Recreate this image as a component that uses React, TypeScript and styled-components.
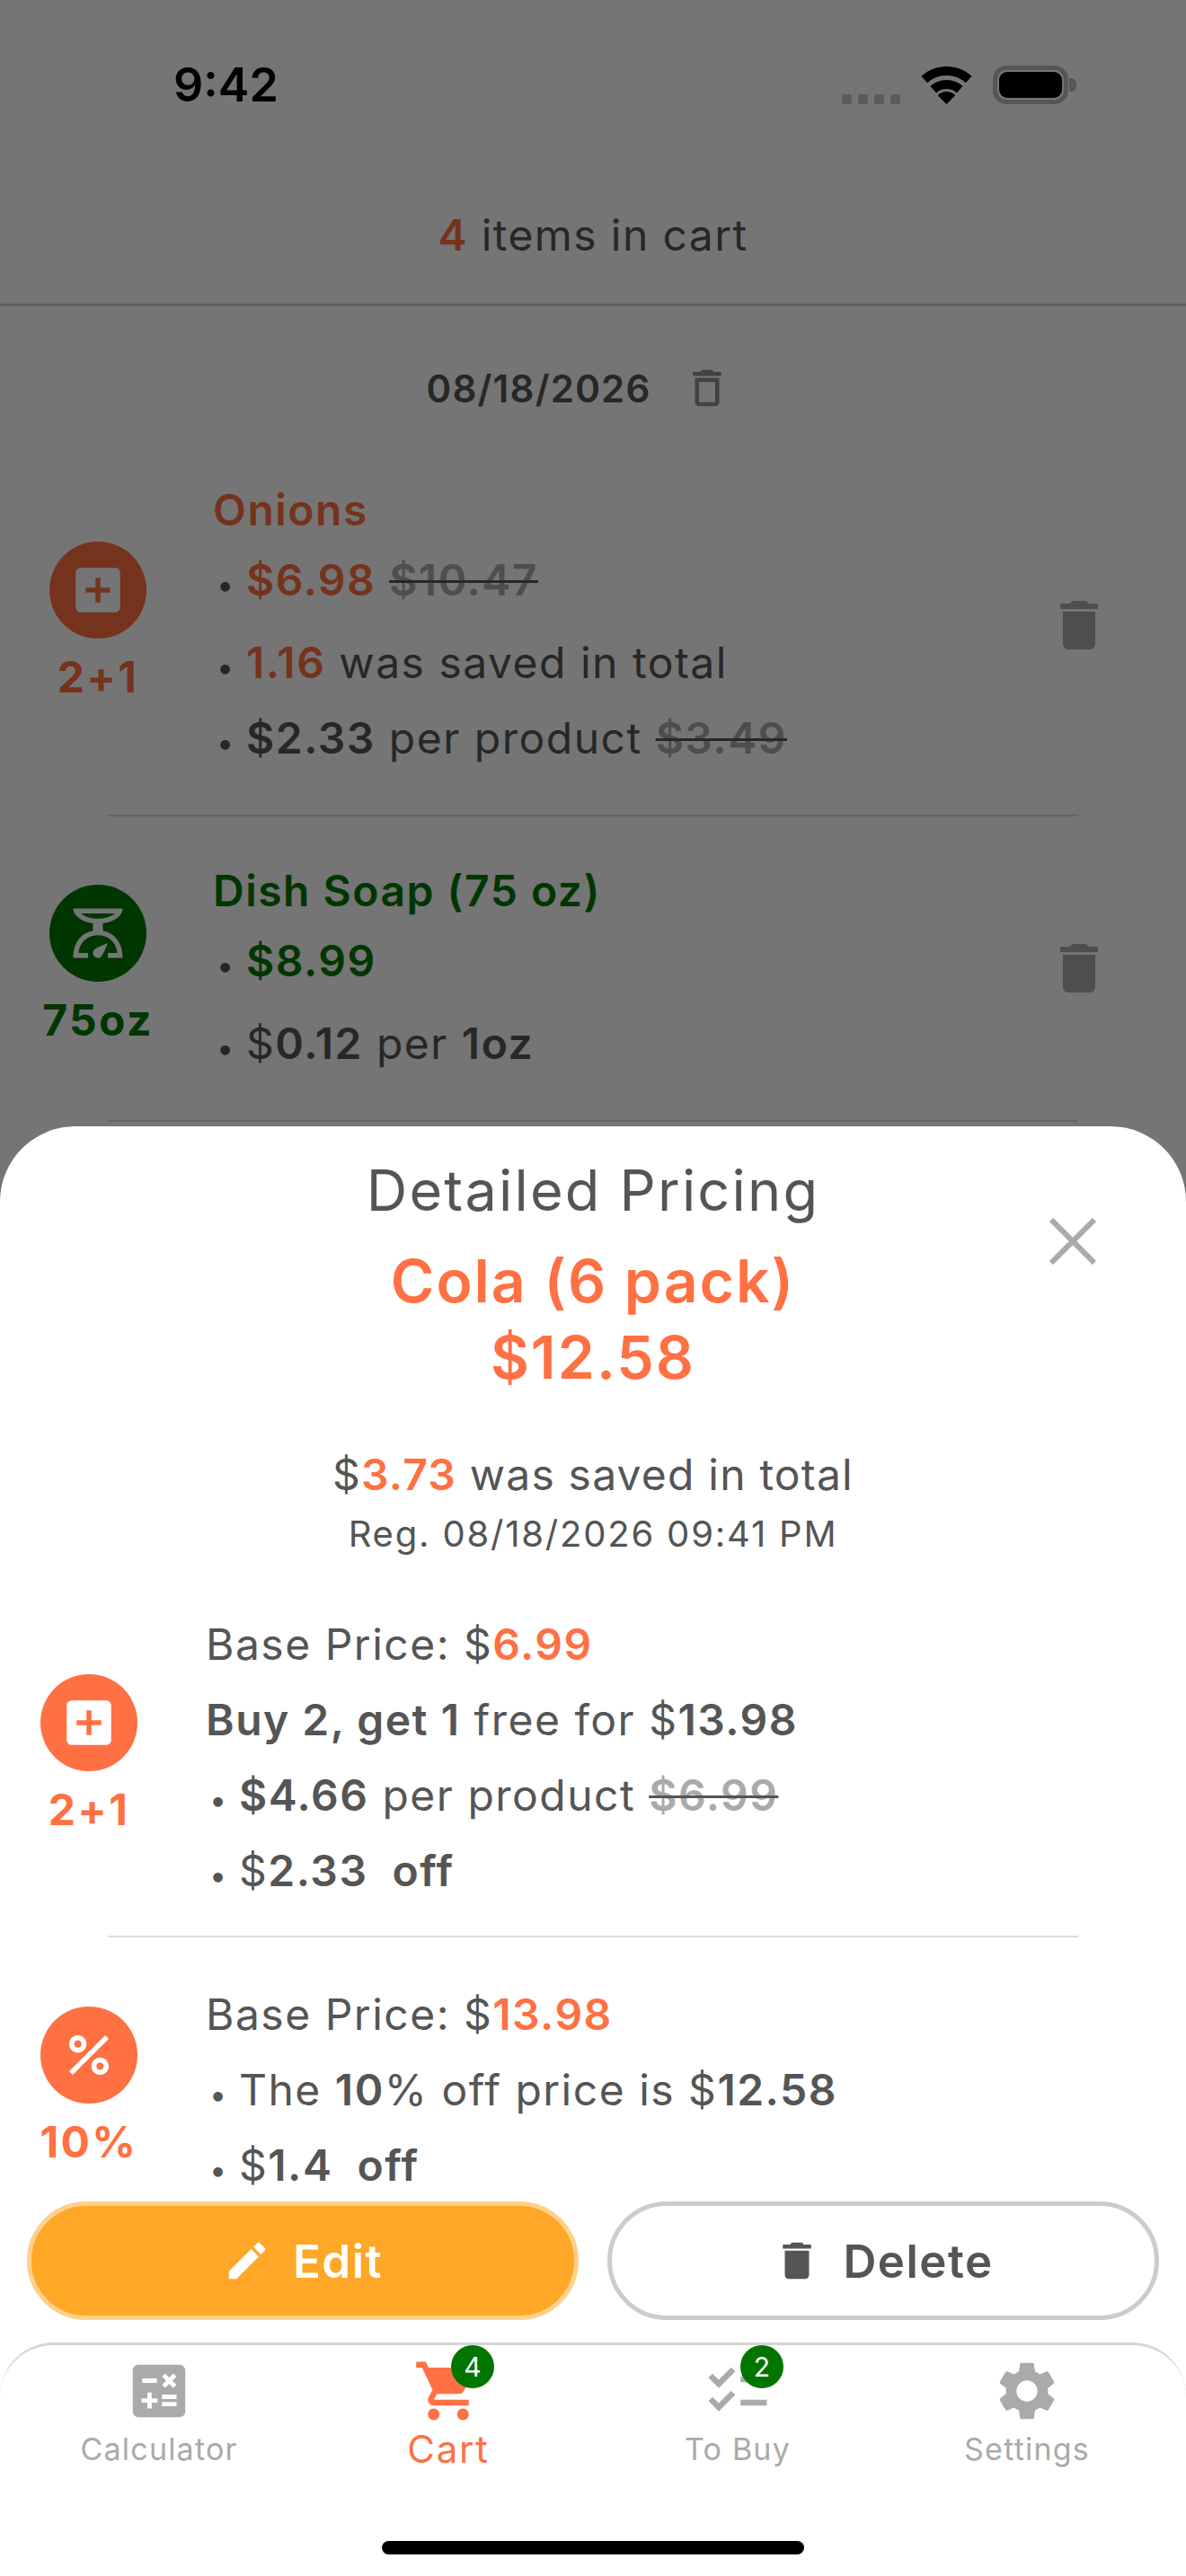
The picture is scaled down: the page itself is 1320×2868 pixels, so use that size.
import styled, { createGlobalStyle } from 'styled-components'
import { MdAddBox, MdCalculate, MdChecklist, MdDelete, MdDeleteOutline, MdEdit, MdOutlineScale, MdPercent, MdSettings, MdShoppingCart } from 'react-icons/md'
import type { ReactNode } from 'react'

const ORANGE = '#ff7043'
const GREEN = '#007700'
const TEXT = '#555555'
const MUTED = '#aaaaaa'

const GlobalStyle = createGlobalStyle`
    html, body {
        margin: 0;
        padding: 0;
        background: #fff;
    }
    * {
        box-sizing: border-box;
    }
`

const Page = styled.div`
    position: relative;
    width: 1320px;
    height: 2868px;
    overflow: hidden;
    background: #fff;
    color: ${TEXT};
    font-family: Inter, "Noto Sans", sans-serif;
`

const Scrim = styled.div`
    position: absolute;
    inset: 0;
    background: rgba(0, 0, 0, 0.54);
`

// status bar
const StatusBar = styled.div`
    display: flex;
    justify-content: space-between;
    align-items: flex-start;
    height: 130px;
    padding: 73px 131px 0 193px;
`

const Time = styled.div`
    font-size: 52px;
    font-weight: 600;
    line-height: 44px;
    color: #000;
`

const StatusIcons = styled.div`
    display: flex;
    align-items: flex-end;
    height: 43px;
`

const SignalDots = styled.div`
    display: flex;
    gap: 7px;
    margin-right: 23px;
`

const SignalDot = styled.span`
    width: 11px;
    height: 11px;
    border-radius: 3px;
    background: #c4c4c4;
`

const WifiIcon = styled.svg`
    display: block;
    margin-right: 23px;
`

const Battery = styled.div`
    position: relative;
    width: 84px;
    height: 43px;
    padding: 2px;
    border: 5px solid #bcbcbc;
    border-radius: 15px;

    &::after {
        content: '';
        position: absolute;
        top: 9px;
        right: -14px;
        width: 8px;
        height: 15px;
        border-radius: 0 6px 6px 0;
        background: #bcbcbc;
    }
`

const BatteryFill = styled.div`
    width: 100%;
    height: 100%;
    border-radius: 9px;
    background: #000;
`

// cart list behind the sheet
const CartHeader = styled.div`
    padding: 94px 0 38px;
    border-bottom: 3px solid #cccccc;
    font-size: 48px;
    line-height: 76px;
    letter-spacing: 1.4px;
    text-align: center;
`

const Strong = styled.b<{ $color?: string }>`
    font-weight: 600;
    color: ${({ $color }) => $color ?? 'inherit'};
`

const DateRow = styled.div`
    display: flex;
    justify-content: center;
    align-items: center;
    gap: 36px;
    height: 60px;
    margin: 61px 0 23px;
    padding-right: 31px;
    font-size: 42px;
    font-weight: 600;
    letter-spacing: 1.2px;

    svg {
        color: #909090;
    }
`

const Row = styled.div<{ $sheet?: boolean }>`
    display: flex;
    align-items: center;
    padding: ${({ $sheet }) => ($sheet ? '44px 0 30px 20px' : '0 83px 0 30px')};
`

const Badge = styled.div<{ $color: string; $sheet?: boolean }>`
    display: flex;
    flex-direction: column;
    align-items: center;
    flex: 0 0 158px;
    margin-right: ${({ $sheet }) => ($sheet ? '51px' : '49px')};
    padding-bottom: 14px;
    color: ${({ $color }) => $color};
`

const BadgeCircle = styled.div<{ $color: string }>`
    display: flex;
    justify-content: center;
    align-items: center;
    width: 108px;
    height: 108px;
    border-radius: 50%;
    background: ${({ $color }) => $color};
    color: #fff;
`

const BadgeLabel = styled.div`
    height: 44px;
    margin-top: 21px;
    font-size: 48px;
    font-weight: 700;
    line-height: 44px;
    letter-spacing: 2.4px;
    white-space: nowrap;
`

const Lines = styled.div<{ $sheet?: boolean }>`
    flex: 1;
    min-width: 0;
    padding: ${({ $sheet }) => ($sheet ? '0' : '53px 0 43px')};
`

const ItemName = styled.div<{ $color: string }>`
    height: 60px;
    font-size: 48px;
    font-weight: 600;
    line-height: 60px;
    letter-spacing: 1.5px;
    color: ${({ $color }) => $color};
`

const Line = styled.div<{ $price?: boolean; $sheet?: boolean }>`
    height: ${({ $price }) => ($price ? '96px' : '84px')};
    margin-bottom: ${({ $price }) => ($price ? '2px' : '0')};
    font-size: 48px;
    line-height: ${({ $price }) => ($price ? '96px' : '84px')};
    letter-spacing: 1.5px;
    white-space: pre-wrap;
`

const Bullet = styled.span`
    display: inline-block;
    width: 37px;
    padding-left: 4px;
    font-size: 34px;
    letter-spacing: 0;
`

const Struck = styled.span`
    font-weight: 600;
    color: ${MUTED};
    text-decoration: line-through;
    text-decoration-color: ${TEXT};
    text-decoration-thickness: 3px;
`

const RowTrash = styled.div`
    flex: 0 0 72px;
    height: 72px;
    color: ${MUTED};
`

const Divider = styled.div`
    height: 2px;
    margin: 0 120px;
    background: #dddddd;
`

// bottom sheet
const Sheet = styled.div`
    position: absolute;
    top: 1254px;
    left: 0;
    right: 0;
    bottom: 0;
    display: flex;
    flex-direction: column;
    padding-top: 33px;
    border-radius: 84px 84px 0 0;
    background: #fff;
`

const SheetTitle = styled.div`
    font-size: 63px;
    line-height: 76px;
    letter-spacing: 2.2px;
    text-align: center;
`

const CloseButton = styled.svg`
    position: absolute;
    top: 102px;
    right: 100px;
`

const ProductName = styled.div`
    margin-top: 21px;
    font-size: 66px;
    font-weight: 600;
    line-height: 85px;
    letter-spacing: 2px;
    text-align: center;
    color: ${ORANGE};
`

const ProductPrice = styled(ProductName)`
    margin-top: 0;
`

const Saved = styled.div`
    margin-top: 58px;
    font-size: 48px;
    line-height: 60px;
    letter-spacing: 1.2px;
    text-align: center;
`

const Registered = styled.div`
    margin-top: 6px;
    font-size: 40px;
    line-height: 60px;
    letter-spacing: 1.8px;
    text-align: center;
`

const Details = styled.div`
    flex: 1;
    min-height: 0;
    margin-top: 7px;
    overflow: hidden;
`

const Buttons = styled.div`
    display: flex;
    gap: 32px;
    padding: 0 30px;
`

const ActionButton = styled.button<{ $primary?: boolean }>`
    display: flex;
    flex: 1;
    justify-content: center;
    align-items: center;
    gap: 24px;
    height: 132px;
    border: 5px solid ${({ $primary }) => ($primary ? '#ffd08a' : '#cccccc')};
    border-radius: 66px;
    background: ${({ $primary }) => ($primary ? '#ffa726' : '#fff')};
    color: ${({ $primary }) => ($primary ? '#fff' : TEXT)};
    font-family: inherit;
    font-size: 51px;
    font-weight: 600;
    letter-spacing: 1.5px;
`

// tab bar
const TabBar = styled.div`
    display: grid;
    grid-template-columns: repeat(4, 1fr);
    align-content: start;
    height: 260px;
    margin-top: 25px;
    padding: 12px 16px 0;
    border-top: 3px solid #d5d5d5;
    border-radius: 60px 60px 0 0;
`

const Tab = styled.div<{ $active?: boolean }>`
    display: flex;
    flex-direction: column;
    align-items: center;
    color: ${({ $active }) => ($active ? ORANGE : MUTED)};
`

const TabIcon = styled.div`
    position: relative;
    width: 78px;
    height: 78px;
`

const CountBadge = styled.div`
    position: absolute;
    top: -12px;
    left: 42px;
    display: flex;
    justify-content: center;
    align-items: center;
    width: 48px;
    height: 48px;
    border-radius: 50%;
    background: #007500;
    color: #fff;
    font-size: 30px;
`

const TabLabel = styled.div<{ $active?: boolean }>`
    margin-top: 3px;
    font-size: ${({ $active }) => ($active ? '42px' : '34px')};
    line-height: 46px;
    letter-spacing: ${({ $active }) => ($active ? '1.8px' : '1.2px')};
`

const HomeIndicator = styled.div`
    position: absolute;
    bottom: 24px;
    left: 425px;
    width: 470px;
    height: 15px;
    border-radius: 8px;
    background: #000;
`

type PriceRowProps = {
    icon: ReactNode
    label: string
    color: string
    sheet?: boolean
    children: ReactNode
}

const PriceRow = ({ icon, label, color, sheet, children }: PriceRowProps) => (
    <Row $sheet={sheet}>
        <Badge $color={color} $sheet={sheet}>
            <BadgeCircle $color={color}>{icon}</BadgeCircle>
            <BadgeLabel>{label}</BadgeLabel>
        </Badge>
        <Lines $sheet={sheet}>{children}</Lines>
        {!sheet && (
            <RowTrash>
                <MdDelete size={72} />
            </RowTrash>
        )}
    </Row>
)

export default function App() {
    return (
        <>
            <GlobalStyle />
            <Page>
                <StatusBar>
                    <Time>9:42</Time>
                    <StatusIcons>
                        <SignalDots>
                            <SignalDot />
                            <SignalDot />
                            <SignalDot />
                            <SignalDot />
                        </SignalDots>
                        <WifiIcon width="57" height="42" viewBox="0 0 57 42">
                            <path d="M3.7 14.5A37 37 0 0 1 53.3 14.5M13.8 25.7A22 22 0 0 1 43.2 25.7" fill="none" stroke="#000" strokeWidth="10" />
                            <path d="M28.5 42L18.8 32.3A13 13 0 0 1 38.2 32.3Z" fill="#000" />
                        </WifiIcon>
                        <Battery>
                            <BatteryFill />
                        </Battery>
                    </StatusIcons>
                </StatusBar>

                <CartHeader>
                    <Strong $color={ORANGE}>4</Strong> items in cart
                </CartHeader>

                <DateRow>
                    08/18/2026
                    <MdDeleteOutline size={54} />
                </DateRow>

                <PriceRow icon={<MdAddBox size={66} />} label="2+1" color={ORANGE}>
                    <ItemName $color={ORANGE}>Onions</ItemName>
                    <Line $price>
                        <Bullet>•</Bullet><Strong $color={ORANGE}>$6.98</Strong> <Struck>$10.47</Struck>
                    </Line>
                    <Line>
                        <Bullet>•</Bullet><Strong $color={ORANGE}>1.16</Strong> was saved in total
                    </Line>
                    <Line>
                        <Bullet>•</Bullet><Strong>$2.33</Strong> per product <Struck>$3.49</Struck>
                    </Line>
                </PriceRow>
                <Divider />
                <PriceRow icon={<MdOutlineScale size={66} />} label="75oz" color={GREEN}>
                    <ItemName $color={GREEN}>Dish Soap (75 oz)</ItemName>
                    <Line $price>
                        <Bullet>•</Bullet><Strong $color={GREEN}>$8.99</Strong>
                    </Line>
                    <Line>
                        <Bullet>•</Bullet>$<Strong>0.12</Strong> per <Strong>1oz</Strong>
                    </Line>
                </PriceRow>
                <Divider />

                <Scrim />

                <Sheet>
                    <SheetTitle>Detailed Pricing</SheetTitle>
                    <CloseButton width="52" height="52" viewBox="0 0 52 52">
                        <path d="M2 2L50 50M50 2L2 50" fill="none" stroke={MUTED} strokeWidth="6" />
                    </CloseButton>
                    <ProductName>Cola (6 pack)</ProductName>
                    <ProductPrice>$12.58</ProductPrice>
                    <Saved>
                        $<Strong $color={ORANGE}>3.73</Strong> was saved in total
                    </Saved>
                    <Registered>Reg. 08/18/2026 09:41 PM</Registered>

                    <Details>
                        <PriceRow sheet icon={<MdAddBox size={66} />} label="2+1" color={ORANGE}>
                            <Line $sheet>
                                Base Price: $<Strong $color={ORANGE}>6.99</Strong>
                            </Line>
                            <Line $sheet>
                                <Strong>Buy 2, get 1</Strong> free for $<Strong>13.98</Strong>
                            </Line>
                            <Line $sheet>
                                <Bullet>•</Bullet><Strong>$4.66</Strong> per product <Struck>$6.99</Struck>
                            </Line>
                            <Line $sheet>
                                <Bullet>•</Bullet>$<Strong>2.33  off</Strong>
                            </Line>
                        </PriceRow>
                        <Divider />
                        <PriceRow sheet icon={<MdPercent size={66} />} label="10%" color={ORANGE}>
                            <Line $sheet>
                                Base Price: $<Strong $color={ORANGE}>13.98</Strong>
                            </Line>
                            <Line $sheet>
                                <Bullet>•</Bullet>The <Strong>10</Strong>% off price is $<Strong>12.58</Strong>
                            </Line>
                            <Line $sheet>
                                <Bullet>•</Bullet>$<Strong>1.4  off</Strong>
                            </Line>
                        </PriceRow>
                    </Details>

                    <Buttons>
                        <ActionButton $primary>
                            <MdEdit size={54} />
                            Edit
                        </ActionButton>
                        <ActionButton>
                            <MdDelete size={54} />
                            Delete
                        </ActionButton>
                    </Buttons>

                    <TabBar>
                        <Tab>
                            <TabIcon>
                                <MdCalculate size={78} />
                            </TabIcon>
                            <TabLabel>Calculator</TabLabel>
                        </Tab>
                        <Tab $active>
                            <TabIcon>
                                <MdShoppingCart size={78} />
                                <CountBadge>4</CountBadge>
                            </TabIcon>
                            <TabLabel $active>Cart</TabLabel>
                        </Tab>
                        <Tab>
                            <TabIcon>
                                <MdChecklist size={78} />
                                <CountBadge>2</CountBadge>
                            </TabIcon>
                            <TabLabel>To Buy</TabLabel>
                        </Tab>
                        <Tab>
                            <TabIcon>
                                <MdSettings size={78} />
                            </TabIcon>
                            <TabLabel>Settings</TabLabel>
                        </Tab>
                    </TabBar>
                    <HomeIndicator />
                </Sheet>
            </Page>
        </>
    )
}
